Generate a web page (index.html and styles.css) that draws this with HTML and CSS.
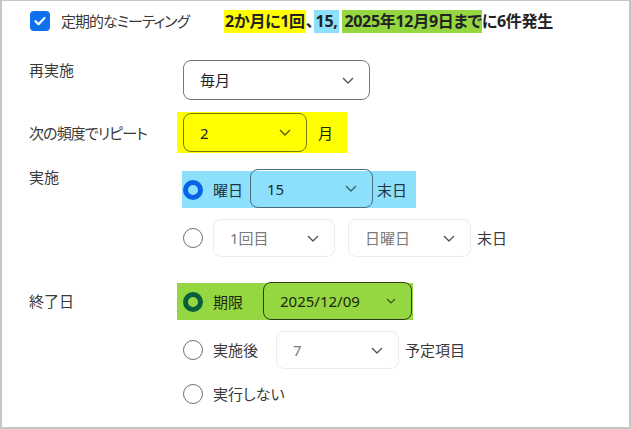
FILE: index.html
```html
<!DOCTYPE html>
<html lang="ja">
<head>
<meta charset="utf-8">
<link rel="stylesheet" href="styles.css">
</head>
<body>
<div class="frame">
  <div class="header">
    <span class="checkbox"><svg width="20" height="20" viewBox="0 0 20 20"><path d="M5.5 10.2l3 3 6-6.2" fill="none" stroke="#fff" stroke-width="2.2" stroke-linecap="round" stroke-linejoin="round"/></svg></span>
    <span class="cb-label">定期的なミーティング</span>
    <span class="summary"><span class="hl hl-y">2か月に1回</span>、<span class="hl hl-b">15,</span> <span class="hl hl-g">2025年12月9日まで</span>に6件発生</span>
  </div>

  <div class="row row-recur">
    <div class="label">再実施</div>
    <div class="content">
      <div class="select sel-recur"><span>毎月</span><svg class="chev" width="12" height="7" viewBox="0 0 12 7"><path d="M1 1l5 5 5-5" fill="none" stroke="currentColor" stroke-width="1.4"/></svg></div>
    </div>
  </div>

  <div class="row row-repeat">
    <div class="label label-narrow">次の頻度でリピート</div>
    <div class="content">
      <div class="band band-y">
        <div class="select sel-repeat"><span>2</span><svg class="chev" width="12" height="7" viewBox="0 0 12 7"><path d="M1 1l5 5 5-5" fill="none" stroke="currentColor" stroke-width="1.4"/></svg></div>
        <span class="txt">月</span>
      </div>
    </div>
  </div>

  <div class="row row-occurs">
    <div class="label label-up">実施</div>
    <div class="content">
      <div class="band band-b">
        <span class="radio radio-on"></span>
        <span class="txt">曜日</span>
        <div class="select sel-day"><span>15</span><svg class="chev" width="12" height="7" viewBox="0 0 12 7"><path d="M1 1l5 5 5-5" fill="none" stroke="currentColor" stroke-width="1.4"/></svg></div>
        <span class="txt txt-end">末日</span>
      </div>
      <div class="line line-week">
        <span class="radio"></span>
        <div class="select disabled sel-w1"><span>1回目</span><svg class="chev" width="12" height="7" viewBox="0 0 12 7"><path d="M1 1l5 5 5-5" fill="none" stroke="currentColor" stroke-width="1.4"/></svg></div>
        <div class="select disabled sel-w2"><span>日曜日</span><svg class="chev" width="12" height="7" viewBox="0 0 12 7"><path d="M1 1l5 5 5-5" fill="none" stroke="currentColor" stroke-width="1.4"/></svg></div>
        <span class="txt">末日</span>
      </div>
    </div>
  </div>

  <div class="row row-end">
    <div class="label label-mid">終了日</div>
    <div class="content">
      <div class="band band-g">
        <span class="radio radio-on"></span>
        <span class="txt">期限</span>
        <div class="select sel-date"><span>2025/12/09</span><svg class="chev chev-sm" width="10" height="6" viewBox="0 0 10 6"><path d="M1 1l4 4 4-4" fill="none" stroke="currentColor" stroke-width="1.2"/></svg></div>
      </div>
      <div class="line line-after">
        <span class="radio"></span>
        <span class="txt">実施後</span>
        <div class="select disabled sel-count"><span>7</span><svg class="chev" width="12" height="7" viewBox="0 0 12 7"><path d="M1 1l5 5 5-5" fill="none" stroke="currentColor" stroke-width="1.4"/></svg></div>
        <span class="txt">予定項目</span>
      </div>
      <div class="line line-none">
        <span class="radio"></span>
        <span class="txt">実行しない</span>
      </div>
    </div>
  </div>
</div>
</body>
</html>
```

FILE: styles.css
```css
html, body {
  margin: 0;
  padding: 0;
  background: #fff;
}

body {
  font-family: "Noto Sans", "Noto Sans CJK JP", sans-serif;
  font-size: 15px;
  line-height: 20px;
  color: #3a3a3a;
  font-feature-settings: "palt";
}

.frame {
  box-sizing: border-box;
  width: 631px;
  height: 429px;
  border: 2px solid #c6c6c6;
  border-top-width: 1px;
  padding-left: 27px;
  overflow: hidden;
}

/* header */
.header {
  height: 40px;
  display: flex;
  align-items: center;
}

.checkbox {
  width: 20px;
  height: 20px;
  border-radius: 4px;
  background: #0e71eb;
  margin-left: 1px;
  display: flex;
}

.cb-label {
  width: 163px;
  margin-left: 11px;
  color: #3a3a3a;
  letter-spacing: -1px;
}

.summary {
  font-size: 16px;
  font-weight: 700;
  color: #222;
  white-space: nowrap;
  letter-spacing: -0.3px;
}

.hl {
  display: inline-block;
  line-height: 23px;
}

.hl-y { background: #ffff00; padding: 0 1px; }
.hl-b { background: #8de0fc; padding: 0 1px 0 2px; }
.hl-g { background: #95d741; padding: 0 0 0 2px; }

/* rows */
.row {
  display: flex;
}

.label {
  width: 154px;
  flex: none;
  color: #3a3a3a;
}

.label-narrow { letter-spacing: -0.9px; }

.content {
  display: flex;
  flex-direction: column;
  align-items: flex-start;
}

.row-recur { margin-top: 19px; }
.row-repeat { margin-top: 12px; align-items: center; }
.row-occurs { margin-top: 18px; }
.row-end { margin-top: 26px; }

.label-up { margin-top: -4px; }
.label-mid { margin-top: 8px; }

/* select */
.select {
  box-sizing: border-box;
  display: flex;
  align-items: center;
  justify-content: space-between;
  border: 1px solid #767676;
  border-radius: 8px;
  padding: 0 15px 0 16px;
  color: #222;
  background: transparent;
  flex: none;
}

.chev { color: #555; display: block; }

.select.disabled {
  border-color: #ececec;
  color: #7a7a7a;
}
.select.disabled .chev { color: #555; }

.sel-recur { width: 187px; height: 40px; }
.sel-repeat { width: 124px; height: 39px; }
.sel-day { width: 123px; height: 39px; }
.sel-w1 { width: 122px; height: 38px; }
.sel-w2 { width: 123px; height: 38px; }
.sel-date { width: 149px; height: 38px; }
.sel-count { width: 123px; height: 38px; }

/* bands (multiply-style highlights) */
.band {
  display: flex;
  align-items: center;
}

.band-y {
  background: #ffff00;
  height: 41px;
  padding: 0 14px 0 6px;
  margin-left: -6px;
  gap: 11px;
}
.band-y .select { border-color: #7a7a00; }
.band-y .chev { color: #5a5a00; }
.band-y .txt { color: #222200; }

.band-b {
  background: #8de0fc;
  height: 37px;
  padding: 0 9px 0 1px;
  margin-left: -1px;
}
.band-b .select {
  border-color: #466f7c;
  align-self: flex-end;
  margin-left: 7px;
  margin-right: 4px;
  color: #1f2a2e;
}
.band-b .chev { color: #3d5f6a; }
.band-b .txt { color: #24343a; }
.band-b .radio-on { border-color: #0863e7; }

.band-g {
  background: #95d741;
  height: 37px;
  padding: 0 1px 0 6px;
  margin-left: -6px;
}
.band-g .select {
  border-color: #2f3d17;
  align-self: flex-end;
  margin-left: 20px;
  color: #1c2610;
}
.band-g .chev { color: #3b5318; }
.band-g .txt { color: #1e2a10; }
.band-g .radio-on { border-color: #085f3c; }

/* radios */
.radio {
  box-sizing: border-box;
  width: 20px;
  height: 20px;
  border-radius: 50%;
  border: 1px solid #6e6e6e;
  background: #fff;
  flex: none;
}

.radio-on {
  border-width: 5px;
  background: transparent;
}

.band .radio + .txt,
.line .radio + .txt { margin-left: 10px; }

/* sub lines */
.line {
  display: flex;
  align-items: center;
}

.line-week {
  margin-top: 11px;
  height: 38px;
}
.line-week .sel-w1 { margin-left: 10px; }
.line-week .sel-w2 { margin-left: 13px; }
.line-week .txt { margin-left: 6px; }

.line-after {
  margin-top: 11px;
  height: 38px;
}
.line-after .select { margin-left: 18px; }
.line-after .select + .txt { margin-left: 6px; }

.line-none {
  margin-top: 15px;
  height: 20px;
}

.txt {
  white-space: nowrap;
  color: #3a3a3a;
}
```
